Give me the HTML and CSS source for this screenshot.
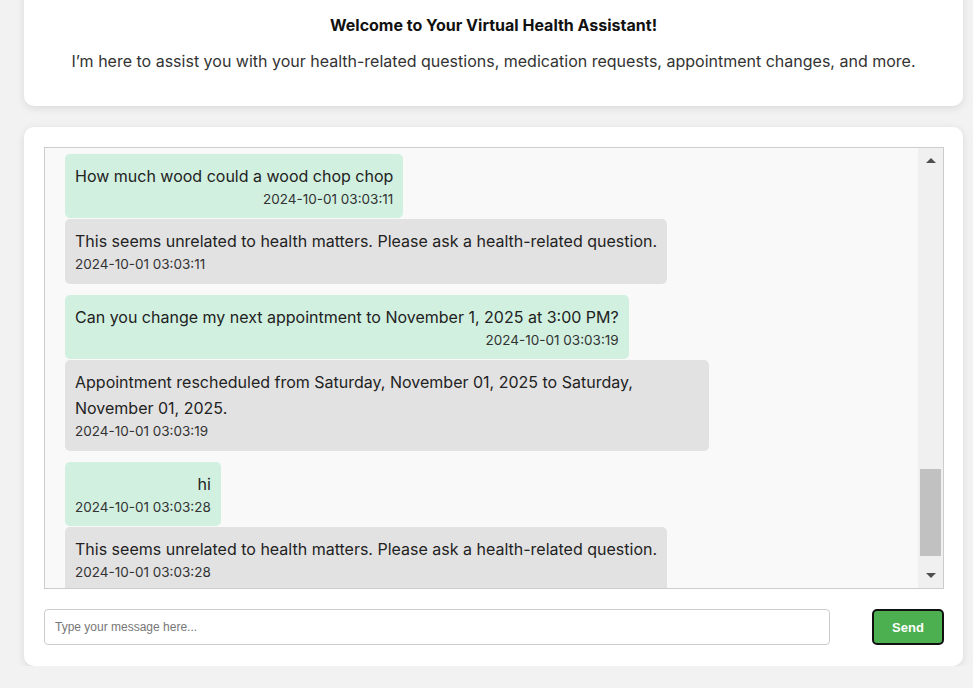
FILE: index.html
```html
<!DOCTYPE html>
<html lang="en">
<head>
<meta charset="utf-8">
<title>Virtual Health Assistant</title>
<link rel="stylesheet" href="styles.css">
</head>
<body>
<div class="page">
  <section class="card intro">
    <h1 class="title">Welcome to Your Virtual Health Assistant!</h1>
    <p class="subtitle">I’m here to assist you with your health-related questions, medication requests, appointment changes, and more.</p>
  </section>

  <section class="card chat">
    <div class="chatbox">
      <div class="messages">
        <div class="msg user">
          <div class="text">How much wood could a wood chop chop</div>
          <div class="time">2024-10-01 03:03:11</div>
        </div>
        <div class="msg bot">
          <div class="text">This seems unrelated to health matters. Please ask a health-related question.</div>
          <div class="time">2024-10-01 03:03:11</div>
        </div>
        <div class="msg user">
          <div class="text">Can you change my next appointment to November 1, 2025 at 3:00 PM?</div>
          <div class="time">2024-10-01 03:03:19</div>
        </div>
        <div class="msg bot">
          <div class="text">Appointment rescheduled from Saturday, November 01, 2025 to Saturday, November 01, 2025.</div>
          <div class="time">2024-10-01 03:03:19</div>
        </div>
        <div class="msg user">
          <div class="text">hi</div>
          <div class="time">2024-10-01 03:03:28</div>
        </div>
        <div class="msg bot">
          <div class="text">This seems unrelated to health matters. Please ask a health-related question.</div>
          <div class="time">2024-10-01 03:03:28</div>
        </div>
      </div>
      <div class="scrollbar">
        <div class="sb-btn"><span class="arrow up"></span></div>
        <div class="sb-track"><div class="sb-thumb"></div></div>
        <div class="sb-btn"><span class="arrow down"></span></div>
      </div>
    </div>
    <div class="composer">
      <input class="input" type="text" placeholder="Type your message here...">
      <button class="send" type="button">Send</button>
    </div>
  </section>
</div>
</body>
</html>
```

FILE: styles.css
```css
* { box-sizing: border-box; }

html, body {
  margin: 0;
  padding: 0;
  background: #f2f2f2;
  font-family: Inter, "Noto Sans", sans-serif;
  color: #222;
  overflow: hidden;
}

.page {
  display: flex;
  flex-direction: column;
  gap: 21px;
  padding: 0 10px 0 24px;
  margin-top: -14px;
}

.card {
  background: #fff;
  border-radius: 10px;
  box-shadow: 0 2px 8px rgba(0, 0, 0, 0.1);
}

.intro {
  padding: 27px 20px 33px;
  text-align: center;
}

.title {
  margin: 0;
  font-size: 16px;
  font-weight: 700;
  line-height: 24px;
  color: #111;
}

.subtitle {
  margin: 12px 0 0;
  font-size: 16px;
  line-height: 24px;
  color: #333;
}

.chat {
  padding: 20px 19px 21px 20px;
}

.chatbox {
  display: flex;
  height: 442px;
  border: 1px solid #ccc;
  background: #f9f9f9;
}

.messages {
  flex: 1;
  overflow: hidden;
  display: flex;
  flex-direction: column;
  align-items: flex-start;
  padding: 6px 20px 0;
}

.msg {
  flex-shrink: 0;
  max-width: 644px;
  padding: 9px 10px 10px;
  border-radius: 5px;
  font-size: 16px;
}

.msg .text {
  line-height: 26px;
  color: #222;
}

.msg .time {
  font-size: 13.5px;
  line-height: 18px;
  margin-top: 1px;
  color: #333;
}

.user {
  background: #d1f0e0;
  text-align: right;
  margin-bottom: 1px;
}

.bot {
  background: #e2e2e2;
  text-align: left;
  margin-bottom: 11px;
}

.bot .time {
  line-height: 19px;
}

.scrollbar {
  width: 25px;
  flex-shrink: 0;
  background: #f0f0f0;
  display: flex;
  flex-direction: column;
}

.sb-btn {
  height: 25px;
  display: flex;
  align-items: center;
  justify-content: center;
}

.arrow {
  width: 0;
  height: 0;
  border-left: 5px solid transparent;
  border-right: 5px solid transparent;
}

.arrow.up { border-bottom: 5px solid #505050; }
.arrow.down { border-top: 5px solid #505050; }

.sb-track {
  flex: 1;
  display: flex;
  flex-direction: column;
  justify-content: flex-end;
  padding: 0 2px 7px;
}

.sb-thumb {
  height: 87px;
  background: #c1c1c1;
}

.composer {
  display: flex;
  align-items: center;
  gap: 42px;
  margin-top: 20px;
}

.input {
  flex: 1;
  height: 36px;
  border: 1px solid #ccc;
  border-radius: 4px;
  padding: 0 10px;
  font-family: "Liberation Sans", Arial, sans-serif;
  font-size: 12px;
  background: #fff;
  outline: none;
}

.input::placeholder {
  color: #777;
}

.send {
  width: 72px;
  height: 36px;
  background: #4caf50;
  border: 2px solid #111;
  border-radius: 5px;
  color: #fff;
  font-family: "Liberation Sans", Arial, sans-serif;
  font-size: 13px;
  font-weight: 700;
  cursor: pointer;
}
```
